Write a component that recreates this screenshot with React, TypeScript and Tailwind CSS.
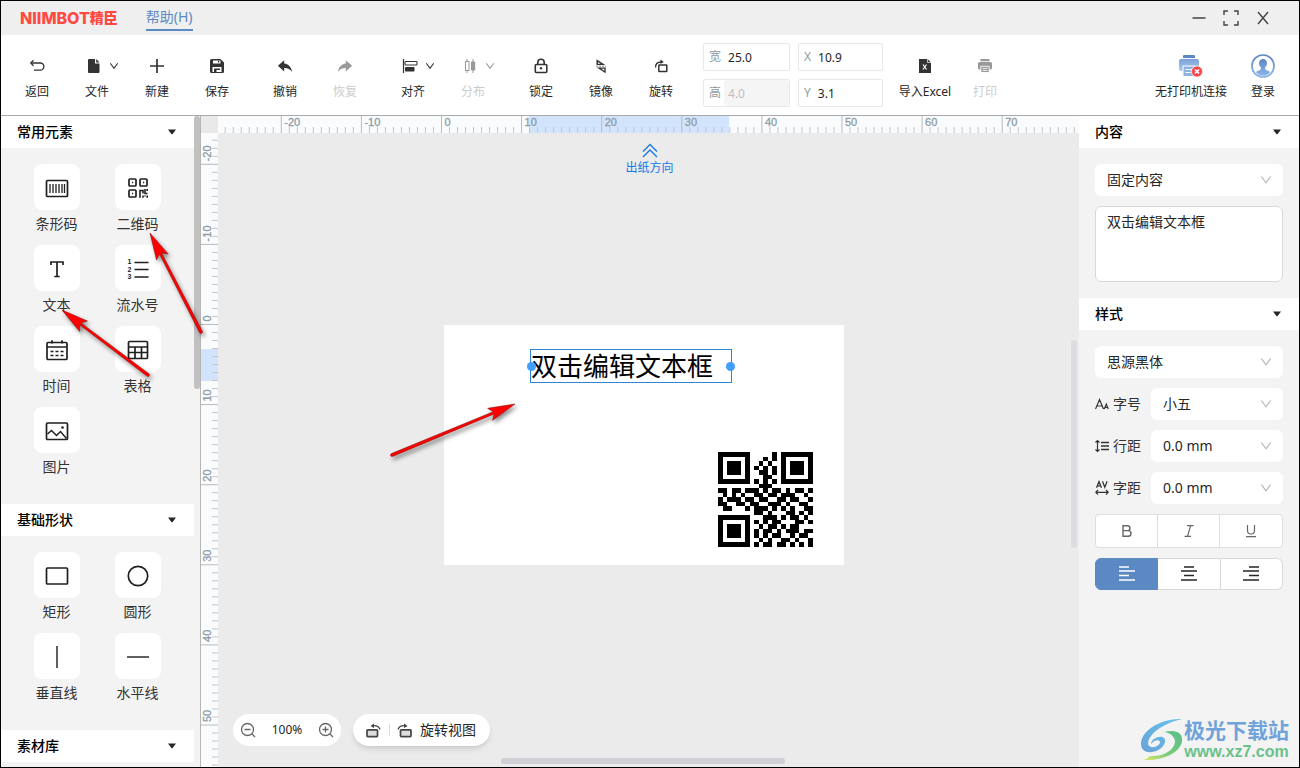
import { useEffect, useState } from "react";
import type { ReactNode } from "react";

const FONT = "font-['Noto_Sans','Noto_Sans_CJK_SC',sans-serif]";

const QR_ROWS = [
  "111111100000101111111",
  "100000100010101000001",
  "101110100101001011101",
  "101110101010101011101",
  "101110100110101011101",
  "100000100011001000001",
  "111111101010101111111",
  "000000000111000000000",
  "110110111010110101101",
  "010101001101101110010",
  "101110110110011011001",
  "110011011001110100110",
  "011000101110101010011",
  "000000001101000110101",
  "111111100011101011010",
  "100000101010110001101",
  "101110100101101011000",
  "101110101011010111011",
  "101110101010110010110",
  "100000100101001101001",
  "111111101011011010101",
];

/* ---------- small icons ---------- */
const Svg = ({ w = 20, h = 20, children }: { w?: number; h?: number; children: ReactNode }) => (
  <svg width={w} height={h} viewBox={`0 0 ${w} ${h}`} fill="none" stroke="currentColor" className="shrink-0">
    {children}
  </svg>
);

const Chevron = ({ size = 8 }: { size?: number }) => (
  <svg width={size} height={size} viewBox="0 0 8 8" fill="none" stroke="currentColor" className="shrink-0">
    <path d="M0.3 1.2 4 6.3 7.7 1.2" strokeWidth={size > 8 ? 0.9 : 1.1} />
  </svg>
);

const Caret = () => (
  <svg width="8" height="6" viewBox="0 0 8 6" fill="#262626">
    <path d="M0 0.5h8L4.6 5a.8.8 0 0 1-1.2 0z" />
  </svg>
);

const BackIcon = () => (
  <Svg>
    <path d="M4 7h9.300a3.600 3.600 0 0 1 0 7.200H7" strokeWidth="1.3" />
    <path d="M6.500 4.300 3.800 7l2.700 2.700" strokeWidth="1.300" />
  </Svg>
);
const FileIcon = () => (
  <Svg>
    <path d="M5 3h6v4.5h4.5V16a1 1 0 0 1-1 1H5a1 1 0 0 1-1-1V4a1 1 0 0 1 1-1zM12.2 3l3.3 3.4h-3.3z" fill="currentColor" stroke="none" />
  </Svg>
);
const PlusIcon = () => (
  <Svg>
    <path d="M10 3v14M3 10h14" strokeWidth="1.7" />
  </Svg>
);
const SaveIcon = () => (
  <Svg>
    <path d="M4.5 3h9L17 6.5v9a1.5 1.5 0 0 1-1.500 1.500h-11A1.500 1.500 0 0 1 3 15.500v-11A1.500 1.500 0 0 1 4.500 3z" fill="currentColor" stroke="none" />
    <path d="M6 4.500h7.500v3H6zM5.500 11h9v5h-9z" fill="white" stroke="none" />
    <path d="M11 4.500h1.200v2H11zM7 12.500h2.500V16H7zM9.500 12.500h3.500V14H9.500z" fill="currentColor" stroke="none" />
  </Svg>
);
const ReplyIcon = ({ flip = false }: { flip?: boolean }) => (
  <svg width="20" height="20" viewBox="0 0 24 24" fill="currentColor" className={flip ? "-scale-x-100" : ""}>
    <path d="M11 9V5l-7.500 6.800L11 18.500v-4.200c4.500 0 7.500 1.500 9.500 5-.6-5.200-3.800-9.600-9.500-10.300z" />
  </svg>
);
const AlignIcon = () => (
  <Svg>
    <path d="M3.500 3v14" strokeWidth="1.200" />
    <rect x="5" y="5.500" width="12" height="3.500" rx=".8" strokeWidth="1.100" />
    <rect x="5" y="11" width="9.500" height="4.500" rx=".8" fill="currentColor" stroke="none" />
  </Svg>
);
const DistributeIcon = () => (
  <Svg>
    <path d="M7 3v2.500M7 14.500V17M13 3v14" strokeWidth="1" />
    <rect x="5.500" y="5.500" width="3.500" height="9" />
    <rect x="11" y="5.500" width="4.200" height="9" rx=".8" fill="currentColor" stroke="none" />
  </Svg>
);
const LockIcon = () => (
  <Svg>
    <rect x="4.300" y="8.500" width="11.500" height="8" rx="1" strokeWidth="1.600" />
    <path d="M6.800 8.500V6.500a3.200 3.200 0 0 1 6.400 0v2" strokeWidth="1.600" />
    <circle cx="10" cy="12.300" r="1.200" fill="currentColor" stroke="none" />
  </Svg>
);
const MirrorIcon = () => (
  <Svg>
    <path d="M5.500 3.300 14.300 9H5.500z" fill="currentColor" stroke="none" />
    <path d="M7 6v1.700h2.700z" fill="white" stroke="none" />
    <path d="M5 10.200h10" strokeWidth="1" strokeDasharray="2 1" stroke="#888" />
    <path d="M5.700 11.500h9v5.800z" fill="currentColor" stroke="none" />
    <path d="M10 12.700h3.300v2z" fill="white" stroke="none" />
  </Svg>
);
const RotateIcon = () => (
  <Svg>
    <rect x="7.800" y="9" width="8" height="6.500" rx=".5" strokeWidth="1.500" />
    <path d="M4.500 11.500c0-3.500 2-5.500 5.500-5.500" strokeWidth="1.300" />
    <path d="M9.500 3.500 12.800 6 9.500 8z" fill="currentColor" stroke="none" />
  </Svg>
);
const RotateViewIcon = ({ left = false }: { left?: boolean }) => (
  <svg width="20" height="20" viewBox="0 -1 20 20" fill="none" stroke="currentColor" className={left ? "-scale-x-100" : ""}>
    <rect x="6.500" y="8.800" width="10.500" height="6.800" rx=".8" fill="#ddd" strokeWidth="1.700" />
    <path d="M4 8.500c.8-2.600 3-4 7-3.800" strokeWidth="1.300" />
    <path d="M10 2.500 13.500 5 10 7z" fill="currentColor" stroke="none" />
  </svg>
);
const ExcelIcon = () => (
  <Svg>
    <path d="M4 3h8.500L16 6.500V17H4z" fill="currentColor" stroke="none" />
    <path d="M12.500 3v3.500H16" stroke="white" strokeWidth=".7" />
    <path d="m8 8.500 3.500 5M11.500 8.500 8 13.500" stroke="white" strokeWidth="1.200" />
  </Svg>
);
const PrintIcon = () => (
  <Svg>
    <path d="M5.500 3h9v2.300h-9zM4.500 6h11A1.500 1.500 0 0 1 17 7.500V12a1.500 1.500 0 0 1-1.500 1.500h-11A1.500 1.500 0 0 1 3 12V7.500A1.500 1.500 0 0 1 4.500 6z" fill="currentColor" stroke="none" />
    <path d="M5.800 10.300h8.400v6.200H5.800z" fill="currentColor" stroke="white" strokeWidth=".9" />
    <path d="M7.500 12.500h5M7.500 14.500h5" stroke="white" strokeWidth=".8" />
  </Svg>
);
const PrinterOffIcon = () => (
  <Svg w={26} h={24}>
    <defs>
      <linearGradient id="printer" x1="0" y1="0" x2="0" y2="1">
        <stop offset="0" stopColor="#7ba3d6" />
        <stop offset="1" stopColor="#abc9f0" />
      </linearGradient>
    </defs>
    <path d="M6 1h10a1 1 0 0 1 1 1v2H5V2a1 1 0 0 1 1-1z" fill="#5b87c2" stroke="none" />
    <path d="M3 5h16a2 2 0 0 1 2 2v8a2 2 0 0 1-2 2H3a2 2 0 0 1-2-2V7a2 2 0 0 1 2-2z" fill="url(#printer)" stroke="none" />
    <path d="M5 12h12v10.500H6a1 1 0 0 1-1-1z" fill="#8fb2e0" stroke="white" />
    <path d="M7.500 15.500h7M7.500 18.500h5" stroke="white" strokeWidth="1.200" />
    <circle cx="19" cy="17.500" r="5.600" fill="#f9474b" stroke="white" strokeWidth=".8" />
    <path d="m17 15.500 4 4M21 15.500l-4 4" stroke="white" strokeWidth="1.700" />
  </Svg>
);
const UserIcon = () => (
  <Svg w={24} h={24}>
    <defs>
      <linearGradient id="user" x1="0" y1="0" x2="0" y2="1">
        <stop offset="0" stopColor="#5b87c2" />
        <stop offset="1" stopColor="#8cb5ea" />
      </linearGradient>
    </defs>
    <circle cx="12" cy="12" r="11" stroke="url(#user)" strokeWidth="1.700" />
    <path d="M12 5c2.500 0 4 1.800 4 4.200 0 1.800-.8 3.200-1.800 4.100-.3 2.200.2 2.700 1.800 3.200 1.500.5 2.500.8 3 1.700A9.500 9.500 0 0 1 12 21.800a9.500 9.500 0 0 1-7-3.600c.5-.9 1.500-1.200 3-1.700 1.600-.5 2.100-1 1.800-3.200C8.800 12.400 8 11 8 9.200 8 6.800 9.500 5 12 5z" fill="url(#user)" stroke="none" />
  </Svg>
);

/* ---------- element icons, 24x24 ---------- */
const elementIcons: Record<string, ReactNode> = {
  条形码: (
    <>
      <rect x="1.500" y="4.500" width="21" height="16" rx="1" />
      <path d="M5 8v9M8 8v9M11 8v9M14 8v9M17 8v9M19.500 8v9" strokeWidth="1.300" />
    </>
  ),
  二维码: (
    <>
      <rect x="3" y="3" width="7" height="7" rx="1" />
      <rect x="14" y="3" width="7" height="7" rx="1" />
      <rect x="3" y="14" width="7" height="7" rx="1" />
      <path d="M6 6.500h1.200M17 6.500h1.200M6 17.500h1.200M14 21.800v-8M14 14.500h3v3M19 13v4.500h2.500M21.200 13v2M17 19.500v2.300M21.200 19.500v2.300M19 19.500v1" strokeWidth="1.600" />
    </>
  ),
  文本: <path d="M6 8V5h12v3M12 5v14.500M9.300 19.500h5.400" />,
  流水号: (
    <>
      <path d="M8.500 5.500h14M8.500 12.500h14M8.500 20h14" />
      <g fill="#1f1f1f" stroke="none" fontSize="7" fontWeight="bold" fontFamily="Liberation Sans">
        <text x="1.500" y="7">1</text>
        <text x="1.500" y="14.500">2</text>
        <text x="1.500" y="22">3</text>
      </g>
    </>
  ),
  时间: (
    <>
      <rect x="2" y="4.500" width="20" height="17" rx="1" />
      <path d="M2 9h20M7 2.300V5.500M17 2.300V5.500" />
      <path d="M5.500 13.500h3M10.500 13.500h3M15.500 13.500h3M5.500 17.500h3M10.500 17.500h3M15.500 17.500h3" />
    </>
  ),
  表格: (
    <>
      <rect x="2.500" y="3.500" width="19" height="17" rx="1" />
      <path d="M2.500 9h19M2.500 14.500h19M9 9v11.500M15.500 9v11.500" />
    </>
  ),
  图片: (
    <>
      <rect x="1.500" y="4" width="21" height="16.500" rx="1" />
      <path d="M2.500 15 6.500 11.500l5 5 4-4 6 7" strokeWidth="1.500" />
      <circle cx="17.500" cy="8.500" r="1.300" fill="#1f1f1f" stroke="none" />
    </>
  ),
  矩形: <rect x="1.500" y="4" width="21" height="16" rx="1" />,
  圆形: <circle cx="12" cy="12" r="9.700" />,
  垂直线: <path d="M12 1v22" stroke="#444" />,
  水平线: <path d="M1 12h22" stroke="#444" />,
};

type ToolProps = { label: string; icon: ReactNode; menu?: boolean; disabled?: boolean; wide?: boolean };

const Tool = ({ label, icon, menu, disabled, wide }: ToolProps) => (
  <button
    type="button"
    disabled={disabled}
    className={`flex shrink-0 flex-col items-center gap-[5px] pt-5 ${wide ? "w-[84px]" : "w-[60px]"} ${
      disabled ? "text-[#ccc]" : "text-[#262626]"
    }`}
  >
    <span className={`flex h-[22px] items-center gap-1.5 ${menu ? "pl-2" : ""} ${disabled ? "text-[#999]" : "text-[#333]"}`}>
      {icon}
      {menu && <Chevron />}
    </span>
    <span className="whitespace-nowrap text-xs leading-5">{label}</span>
  </button>
);

const Field = ({ label, value, disabled }: { label: string; value: string; disabled?: boolean }) => (
  <label className="flex h-7 items-center rounded-xs border border-[#e8e8e8] bg-white pl-[5px] text-xs text-[#8c9ba5]">
    <span className="mr-[3px] shrink-0">{label}</span>
    <input
      defaultValue={value}
      disabled={disabled}
      className="h-full w-full min-w-0 rounded bg-white pl-1 text-[#262626] outline-none disabled:bg-[#f5f5f5] disabled:text-[#bfbfbf]"
    />
  </label>
);

const SectionHeader = ({ title }: { title: string }) => (
  <button type="button" className="flex h-8 w-full shrink-0 items-center justify-between bg-white pl-4 pr-[18px] text-sm font-medium text-black">
    {title}
    <Caret />
  </button>
);

const ElementGrid = ({ items }: { items: string[] }) => (
  <div className="grid grid-cols-[81px_81px] py-4 pl-[15px]">
    {items.map((name) => (
      <button key={name} type="button" className="flex h-[81px] flex-col items-center text-sm text-[#333]">
        <span className="flex size-[46px] shrink-0 items-center justify-center rounded-lg bg-white">
          <svg width="24" height="24" viewBox="0 -1 24 24" fill="none" stroke="#1f1f1f" strokeWidth="1.700">
            {elementIcons[name]}
          </svg>
        </span>
        <span className="leading-7">{name}</span>
      </button>
    ))}
  </div>
);

// one tick per millimetre
const STEP = 8.01;

const useWindowSize = () => {
  const [size, setSize] = useState({ w: window.innerWidth, h: window.innerHeight });
  useEffect(() => {
    const update = () => setSize({ w: window.innerWidth, h: window.innerHeight });
    window.addEventListener("resize", update);
    return () => window.removeEventListener("resize", update);
  }, []);
  return size;
};

const ticks = (first: number, origin: number, length: number) => {
  const list: number[] = [];
  for (let n = first; origin + n * STEP < length; n++) list.push(n);
  return list;
};

const TopRuler = () => {
  const { w } = useWindowSize();
  return (
    <svg className="h-[17px] min-w-0 flex-1 bg-[#f9fbfd]">
      <rect x="311" width="200" height="17" fill="#d2e4fb" />
      {ticks(-27, 223.5, w - 439).map((n) => {
        const x = 223.5 + n * STEP;
        const major = n % 10 === 0;
        return (
          <g key={n}>
            <path d={`M${x} ${major ? 0 : 11}V17`} stroke={major ? "#b9bbbd" : "#c4c6c8"} />
            {major && (
              <text x={x + 3} y="10" fontSize="11" fill="#8d9ca6" stroke="#8d9ca6" strokeWidth=".3" fontFamily="Liberation Sans">
                {n}
              </text>
            )}
          </g>
        );
      })}
    </svg>
  );
};

const SideRuler = () => {
  const { h } = useWindowSize();
  return (
    <svg className="w-[17px] shrink-0 bg-[#f9fbfd]">
      <rect y="216" width="17" height="32" fill="#d2e4fb" />
      {ticks(-23, 191.5, h - 134).map((n) => {
        const y = 191.5 + n * STEP;
        const major = n % 10 === 0;
        return (
          <g key={n}>
            <path d={`M${major ? 0 : 11} ${y}H17`} stroke={major ? "#b9bbbd" : "#c4c6c8"} />
            {major && (
              <text transform={`translate(10 ${y - 3}) rotate(-90)`} fontSize="11" fill="#8d9ca6" stroke="#8d9ca6" strokeWidth=".3" fontFamily="Liberation Sans">
                {n}
              </text>
            )}
          </g>
        );
      })}
    </svg>
  );
};

const QrCode = () => (
  <svg viewBox="0 0 21 21" className="absolute left-[274px] top-[127px] size-[95px]" shapeRendering="crispEdges">
    {QR_ROWS.map((row, y) =>
      row.split("").map((c, x) => c === "1" && <rect key={`${x}-${y}`} x={x} y={y} width="1" height="1" />)
    )}
  </svg>
);

const Canvas = () => (
  <div className="relative min-w-0 flex-1 overflow-hidden bg-[#ebebeb]">
    <div className="flex flex-col items-center pl-0.5 pt-2.5 text-xs text-[#1677e8]">
      <svg width="16" height="15" viewBox="0 0 16 15" fill="none" stroke="currentColor" strokeWidth="1.300">
        <path d="M1 8.500 8 1.500l7 7M1 14 8 7l7 7" />
      </svg>
      <span className="leading-5">出纸方向</span>
    </div>

    <div className="absolute left-[226px] top-[192px] h-[240px] w-[400px] bg-white">
      <div className="absolute left-[86px] top-6 flex h-[34px] w-[202px] items-center whitespace-nowrap border border-[#2f86d6] text-[26px] leading-8 text-black">
        双击编辑文本框
        <i className="absolute -left-1 top-3 size-[9px] rounded-full bg-[#409eff]" />
        <i className="absolute -right-1 top-3 size-[9px] rounded-full bg-[#409eff]" />
      </div>
      <QrCode />
    </div>

    <div className="absolute bottom-[21px] left-[15px] flex gap-3 text-[#444]">
      <div className="flex h-8 w-[108px] items-center justify-between rounded-full bg-white px-[7px]">
        <button type="button" aria-label="缩小">
          <svg width="16" height="16" viewBox="0 0 16 16" fill="none" stroke="#666" strokeWidth="1.300">
            <circle cx="7.500" cy="7.500" r="6" />
            <path d="M4.500 7.500h6M12 12l3 3" />
          </svg>
        </button>
        <span className="text-xs text-[#262626]">100%</span>
        <button type="button" aria-label="放大">
          <svg width="16" height="16" viewBox="0 0 16 16" fill="none" stroke="#666" strokeWidth="1.300">
            <circle cx="7.500" cy="7.500" r="6" />
            <path d="M4.500 7.500h6M7.500 4.500v6M12 12l3 3" />
          </svg>
        </button>
      </div>
      <div className="flex h-8 w-[137px] items-center rounded-full bg-white pl-[11px] shadow-md">
        <button type="button" aria-label="向左旋转">
          <RotateViewIcon left />
        </button>
        <span className="ml-[5px] mr-1 h-3 w-px bg-[#ddd]" />
        <button type="button" className="flex items-center gap-1.5 whitespace-nowrap text-sm">
          <RotateViewIcon />
          <span className="text-[#262626]">旋转视图</span>
        </button>
      </div>
    </div>

    <div className="absolute right-0.5 top-[207px] h-[208px] w-1.5 rounded-full bg-[#dcdce2]" />
    <div className="absolute bottom-[3px] left-[283px] h-1.5 w-[284px] rounded-full bg-[#cfcfd5]" />
  </div>
);

const Select = ({ value, label, id }: { value: string; label?: string; id?: string }) => (
  <div className="relative min-w-0 flex-1 text-[#b4b4b4]">
    <select id={id} aria-label={label} className="h-8 w-full appearance-none rounded-md bg-white px-3 text-sm text-[#262626] outline-none">
      <option>{value}</option>
    </select>
    <span className="pointer-events-none absolute right-3 top-[11px]">
      <Chevron size={10} />
    </span>
  </div>
);

const StyleRow = ({ id, label, icon, value }: { id: string; label: string; icon: ReactNode; value: string }) => (
  <div className="flex items-center">
    <label htmlFor={id} className="flex w-14 items-center gap-1 text-sm text-[#333]">
      <svg width="14" height="16" viewBox="0 0 14 16" fill="none" stroke="currentColor" className="shrink-0">
        {icon}
      </svg>
      {label}
    </label>
    <Select id={id} value={value} />
  </div>
);

const ALIGN_OPTIONS = [
  { name: "左对齐", d: "M0 1h10M0 5h16M0 9.500h10M0 14h16" },
  { name: "居中", d: "M3 1h10M0 5h16M3 9.500h10M0 14h16" },
  { name: "右对齐", d: "M6 1h10M0 5h16M6 9.500h10M0 14h16" },
];

const Inspector = () => {
  const [align, setAlign] = useState(0);
  return (
    <aside className="w-[220px] shrink-0 bg-[#f3f3f3]">
      <SectionHeader title="内容" />
      <div className="flex flex-col gap-2.5 p-4">
        <Select label="内容类型" value="固定内容" />
        <textarea
          aria-label="文本内容"
          defaultValue="双击编辑文本框"
          className="block h-[76px] w-full resize-none rounded-md border border-[#d9d9d9] bg-white px-[11px] py-1 text-sm leading-[22px] text-[#262626] outline-none"
        />
      </div>
      <SectionHeader title="样式" />
      <div className="flex flex-col gap-2.5 p-4">
        <Select label="字体" value="思源黑体" />
        <StyleRow
          id="size"
          label="字号"
          value="小五"
          icon={<path d="M.5 13 4.500 3.500 8.500 13M2 10h5M9.300 13l2-5 2 5M10 11.500h2.600" strokeWidth="1.200" />}
        />
        <StyleRow
          id="line"
          label="行距"
          value="0.0 mm"
          icon={
            <>
              <path d="M2.500 2.500v11M.5 4.500l2-2 2 2M.5 11.500l2 2 2-2" strokeWidth="1.200" />
              <path d="M6 4.500h8M6 8h8M6 11.500h8" strokeWidth="1.300" />
            </>
          }
        />
        <StyleRow
          id="spacing"
          label="字距"
          value="0.0 mm"
          icon={<path d="M1.500 7.800 4 1.500 6.500 7.800M2.500 5.800h3M7.500 1.200l2.300 6 2.300-6M.8 12.300h12.400M3 10l-2.200 2.300L3 14.600M11 10l2.200 2.300L11 14.600" strokeWidth="1.200" />}
        />
        <div className="grid h-[34px] grid-cols-3 divide-x divide-[#dcdfe6] rounded-sm border border-[#dcdfe6] bg-white text-[#666]">
          <button type="button" className="flex items-center justify-center" aria-label="加粗">
            <svg width="14" height="14" viewBox="0 0 14 14" fill="none" stroke="currentColor" strokeWidth="1.400">
              <path d="M3 1.700h4.500a2.400 2.400 0 0 1 0 4.900H3zM3 6.600h5.200a2.800 2.800 0 0 1 0 5.600H3z" />
            </svg>
          </button>
          <button type="button" className="flex items-center justify-center" aria-label="斜体">
            <svg width="14" height="14" viewBox="0 0 14 14" fill="none" stroke="currentColor" strokeWidth="1.200">
              <path d="M5 1.600h6.500M2.500 12.300H9M8.600 1.600 5.500 12.300" />
            </svg>
          </button>
          <button type="button" className="flex items-center justify-center" aria-label="下划线">
            <svg width="14" height="14" viewBox="0 0 14 14" fill="none" stroke="currentColor" strokeWidth="1.200">
              <path d="M3.500 1v5.500a3.500 3.500 0 0 0 7 0V1M2 12.700h10" />
            </svg>
          </button>
        </div>
        <div className="flex h-8">
          {ALIGN_OPTIONS.map((option, i) => (
            <button
              key={option.name}
              type="button"
              aria-label={option.name}
              onClick={() => setAlign(i)}
              className={`flex flex-1 items-center justify-center border-y border-r first:rounded-l-md first:border-l last:rounded-r-md ${
                align === i ? "border-[#5b89c3] bg-[#5b89c3] text-white" : "border-[#d9d9d9] bg-white text-[#262626]"
              }`}
            >
              <svg width="16" height="16" viewBox="0 0 16 16" stroke="currentColor" strokeWidth="1.300">
                <path d={option.d} />
              </svg>
            </button>
          ))}
        </div>
      </div>
    </aside>
  );
};

// red pointer drawn from tail (x2, y2) to tip (x1, y1)
const Arrow = ({ x1, y1, x2, y2 }: { x1: number; y1: number; x2: number; y2: number }) => {
  const len = Math.hypot(x2 - x1, y2 - y1);
  const deg = (Math.atan2(y2 - y1, x2 - x1) * 180) / Math.PI;
  return (
    <path
      transform={`translate(${x1} ${y1}) rotate(${deg})`}
      d={`M0 0 27 -6.500 23 -1.200 ${len} -1.500a1.500 1.500 0 0 1 0 3L23 1.200 27 6.500z`}
      fill="#fe0000"
      stroke="#8c1010"
      strokeWidth=".5"
    />
  );
};

const Watermark = () => (
  <div className="pointer-events-none absolute bottom-[5px] right-2.5 flex items-center">
    <svg width="44" height="44" viewBox="0 0 44 44">
      <defs>
        <linearGradient id="swirlTop" x1="0" y1="1" x2="1" y2="0">
          <stop offset="0" stopColor="#6ba3dc" />
          <stop offset="1" stopColor="#62c3e6" />
        </linearGradient>
        <linearGradient id="swirlLow" x1="1" y1="0" x2="0" y2="1">
          <stop offset="0" stopColor="#55bf88" />
          <stop offset="0.6" stopColor="#7fcb7c" />
          <stop offset="1" stopColor="#e0e868" />
        </linearGradient>
      </defs>
      <path d="M42 1C22 0 1 12 1 26c0 6 5 9 11 8 7-1 12-5 13-10 1-5-5-7-11-3-2 1-3 3-3 5 3-4 8-5 9-2 0 3-5 6-9 5C3 26 12 8 42 1z" fill="url(#swirlTop)" />
      <path d="M24 14c11-3 19 0 18 9-1 10-16 20-39 19 3-1 5-2 7-4 14 1 24-6 25-14 0-5-4-9-11-10z" fill="url(#swirlLow)" />
    </svg>
    <div className="text-center">
      <div className="text-[21px] font-bold leading-6 text-[#6fa3d9]">极光下载站</div>
      <div className="font-['Liberation_Sans',sans-serif] text-base font-bold leading-5 text-[#6cc08b]">www.xz7.com</div>
    </div>
  </div>
);

export default function App() {
  return (
    <div className={`relative flex h-screen min-w-[1200px] flex-col overflow-hidden border border-black bg-white ${FONT}`}>
      <header className="flex h-[34px] shrink-0 items-center bg-[#efefef] pl-[19px] pr-5">
        <h1 className="flex items-center text-[#ff4a42]">
          <span className="font-['Inter',sans-serif] text-base font-extrabold">NIIMBOT</span>
          <span className="text-sm font-black">精臣</span>
        </h1>
        <a href="#help" className="ml-7 border-b-2 border-[#5b89c3] text-sm leading-6 text-[#5b89c3]">
          帮助(H)
        </a>
        <div className="ml-auto flex text-[#444]">
          <button type="button" aria-label="最小化" className="flex w-8 justify-center">
            <Svg w={16} h={16}>
              <path d="M1.500 8h13" strokeWidth="1.500" />
            </Svg>
          </button>
          <button type="button" aria-label="最大化" className="flex w-8 justify-center">
            <Svg w={16} h={16}>
              <path d="M1 5V1h4M11 1h4v4M15 11v4h-4M5 15H1v-4" strokeWidth="1.400" />
            </Svg>
          </button>
          <button type="button" aria-label="关闭" className="flex w-8 justify-center">
            <Svg w={16} h={16}>
              <path d="m3 2 10 12M13 2 3 14" strokeWidth="1.400" />
            </Svg>
          </button>
        </div>
      </header>

      <nav className="flex h-[81px] shrink-0 border-b border-[#aaa] bg-white px-1.5">
        <div className="flex gap-2">
          <div className="flex">
            <Tool label="返回" icon={<BackIcon />} />
            <Tool label="文件" icon={<FileIcon />} menu />
            <Tool label="新建" icon={<PlusIcon />} />
            <Tool label="保存" icon={<SaveIcon />} />
          </div>
          <div className="flex">
            <Tool label="撤销" icon={<ReplyIcon />} />
            <Tool label="恢复" icon={<ReplyIcon flip />} disabled />
          </div>
          <div className="flex">
            <Tool label="对齐" icon={<AlignIcon />} menu />
            <Tool label="分布" icon={<DistributeIcon />} menu disabled />
          </div>
          <div className="flex">
            <Tool label="锁定" icon={<LockIcon />} />
            <Tool label="镜像" icon={<MirrorIcon />} />
            <Tool label="旋转" icon={<RotateIcon />} />
          </div>
        </div>
        <div className="mx-3 grid grid-cols-[87px_85px] content-center gap-2">
          <Field label="宽" value="25.0" />
          <Field label="X" value="10.9" />
          <Field label="高" value="4.0" disabled />
          <Field label="Y" value="3.1" />
        </div>
        <Tool label="导入Excel" icon={<ExcelIcon />} />
        <Tool label="打印" icon={<PrintIcon />} disabled />
        <div className="ml-auto flex">
          <Tool label="无打印机连接" icon={<PrinterOffIcon />} wide />
          <Tool label="登录" icon={<UserIcon />} />
        </div>
      </nav>

      <main className="flex min-h-0 flex-1">
        <aside className="flex w-[200px] shrink-0 border-r border-[#b5b5b5] bg-[#f3f3f3]">
          <div className="min-w-0 flex-1 overflow-hidden">
            <SectionHeader title="常用元素" />
            <ElementGrid items={["条形码", "二维码", "文本", "流水号", "时间", "表格", "图片"]} />
            <SectionHeader title="基础形状" />
            <ElementGrid items={["矩形", "圆形", "垂直线", "水平线"]} />
            <SectionHeader title="素材库" />
          </div>
          <div className="w-1.5 shrink-0">
            <div className="h-[273px] rounded-full bg-[#c1c1c1]" />
          </div>
        </aside>

        <section className="flex min-w-0 flex-1 flex-col">
          <div className="flex shrink-0">
            <div className="size-[17px] shrink-0 bg-[#e9e9e9]" />
            <TopRuler />
          </div>
          <div className="flex min-h-0 flex-1">
            <SideRuler />
            <Canvas />
          </div>
        </section>

        <Inspector />
      </main>

      <svg className="pointer-events-none absolute inset-0 size-full drop-shadow-[2px_3px_2px_rgba(0,0,0,0.45)]">
        <Arrow x1={149} y1={232} x2={200} y2={331} />
        <Arrow x1={61} y1={309} x2={147} y2={374} />
        <Arrow x1={514} y1={403} x2={391} y2={454} />
      </svg>
      <Watermark />
    </div>
  );
}
